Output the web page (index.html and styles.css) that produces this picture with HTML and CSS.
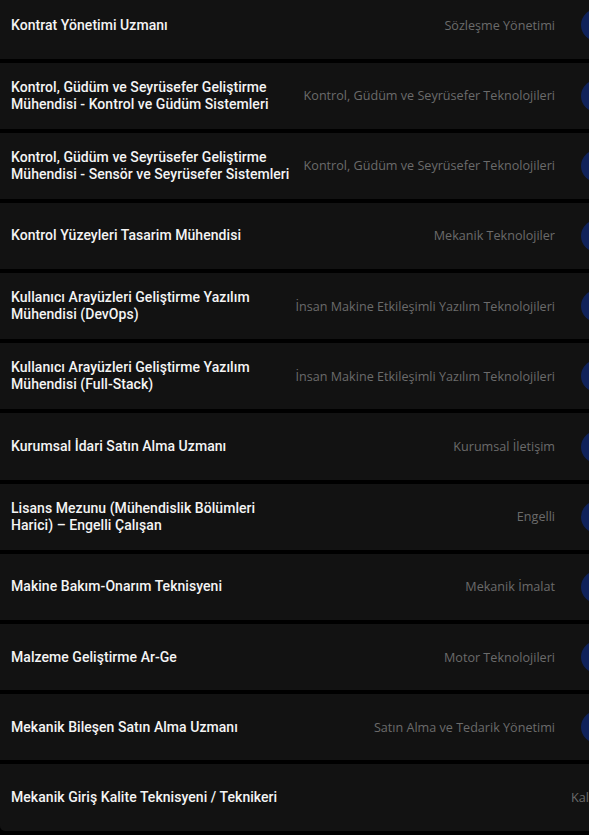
FILE: index.html
```html
<!DOCTYPE html>
<html lang="tr">
<head>
<meta charset="utf-8">
<link rel="stylesheet" href="styles.css">
</head>
<body>
<div class="list">
  <div class="row"><div class="title">Kontrat Yönetimi Uzmanı</div><div class="cat">Sözleşme Yönetimi</div><span class="dot"></span></div>
  <div class="row"><div class="title">Kontrol, Güdüm ve Seyrüsefer Geliştirme Mühendisi - Kontrol ve Güdüm Sistemleri</div><div class="cat">Kontrol, Güdüm ve Seyrüsefer Teknolojileri</div><span class="dot"></span></div>
  <div class="row"><div class="title">Kontrol, Güdüm ve Seyrüsefer Geliştirme Mühendisi - Sensör ve Seyrüsefer Sistemleri</div><div class="cat">Kontrol, Güdüm ve Seyrüsefer Teknolojileri</div><span class="dot"></span></div>
  <div class="row"><div class="title">Kontrol Yüzeyleri Tasarim Mühendisi</div><div class="cat">Mekanik Teknolojiler</div><span class="dot"></span></div>
  <div class="row"><div class="title">Kullanıcı Arayüzleri Geliştirme Yazılım Mühendisi (DevOps)</div><div class="cat">İnsan Makine Etkileşimli Yazılım Teknolojileri</div><span class="dot"></span></div>
  <div class="row"><div class="title">Kullanıcı Arayüzleri Geliştirme Yazılım Mühendisi (Full-Stack)</div><div class="cat">İnsan Makine Etkileşimli Yazılım Teknolojileri</div><span class="dot"></span></div>
  <div class="row"><div class="title">Kurumsal İdari Satın Alma Uzmanı</div><div class="cat">Kurumsal İletişim</div><span class="dot"></span></div>
  <div class="row"><div class="title">Lisans Mezunu (Mühendislik Bölümleri Harici) – Engelli Çalışan</div><div class="cat">Engelli</div><span class="dot"></span></div>
  <div class="row"><div class="title">Makine Bakım-Onarım Teknisyeni</div><div class="cat">Mekanik İmalat</div><span class="dot"></span></div>
  <div class="row"><div class="title">Malzeme Geliştirme Ar-Ge</div><div class="cat">Motor Teknolojileri</div><span class="dot"></span></div>
  <div class="row"><div class="title">Mekanik Bileşen Satın Alma Uzmanı</div><div class="cat">Satın Alma ve Tedarik Yönetimi</div><span class="dot"></span></div>
  <div class="row row-last"><div class="title">Mekanik Giriş Kalite Teknisyeni / Teknikeri</div><div class="cat cat-wide">Kalite Güvence ve Kontrol</div></div>
</div>
</body>
</html>
```
FILE: styles.css
```css
html, body {
  margin: 0;
  padding: 0;
  background: #000;
  overflow: hidden;
  height: 835px;
}

.list {
  width: 640px;
  margin-top: -7.7px;
  display: flex;
  flex-direction: column;
  gap: 4px;
}

.row {
  display: grid;
  grid-template-columns: 284px 260px 58px;
  align-items: center;
  height: 66.2px;
  padding-left: 11px;
  background: #121212;
  overflow: hidden;
}

.row-last {
  border-bottom-left-radius: 5px;
}

.title {
  font-family: Roboto, "Noto Sans", sans-serif;
  font-weight: 500;
  font-size: 14px;
  letter-spacing: 0.05px;
  line-height: 17px;
  color: #f4f4f4;
}

.cat {
  font-family: "Open Sans", "Noto Sans", sans-serif;
  font-size: 12.6px;
  color: #6b6b6b;
  text-align: right;
  white-space: nowrap;
}

.cat-wide {
  grid-column: 2 / 4;
  text-align: left;
  padding-left: 276px;
}

.dot {
  justify-self: end;
  width: 32px;
  height: 32px;
  border-radius: 50%;
  background: #10225a;
}
```
